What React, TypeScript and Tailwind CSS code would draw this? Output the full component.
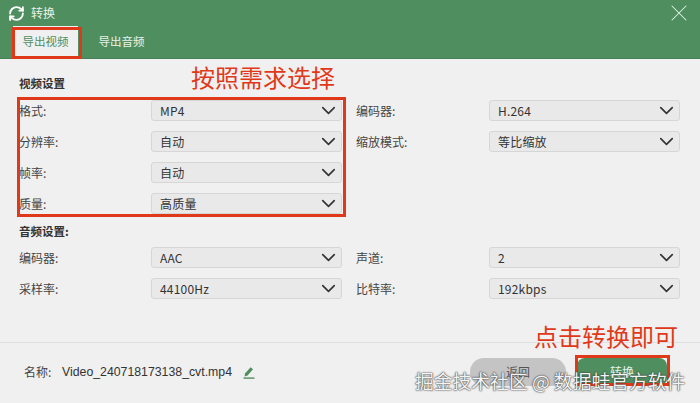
import { ChevronDown, RefreshCw, X } from 'lucide-react';

const font = { fontFamily: '"Noto Sans CJK SC", "Liberation Sans", sans-serif' };

function Select({ value, label, right }: { value: string; label: string; right?: boolean }) {
  return (
    <div className="flex items-center h-[21px]">
      <span className={`${right ? 'w-[133px]' : 'w-[132px]'} shrink-0 text-[12px] text-[#444]`}>{label}</span>
      <div className="w-[191px] h-[21px] flex items-center justify-between pl-2 pr-[1px] rounded-[3px] bg-[#e9e9e9] border border-[#d6d6d6]">
        <span className="text-[12px] text-[#333] tracking-[0.2px]">{value}</span>
        <ChevronDown className="size-[23px] shrink-0 text-[#333]" strokeWidth={1.7} />
      </div>
    </div>
  );
}

export default function App() {
  return (
    <div style={font} className="relative w-[700px] h-[403px] overflow-hidden bg-[#f0f0f0]">
      {/* 顶栏 */}
      <div className="h-[59px] bg-[#4f8f5f] border-b border-[#468055]">
        <div className="h-[26px] flex items-center justify-between pl-[8px] pr-[7px]">
          <div className="flex items-center gap-[6px]">
            <RefreshCw className="size-[17px] text-white" strokeWidth={2.6} />
            <span className="text-[12px] text-[#e8f2ea]">转换</span>
          </div>
          <X className="size-[28px] text-[#dff0e3]" strokeWidth={0.9} />
        </div>
        <div className="flex h-[32px] pl-[13px]">
          <div className="w-[65px] h-[32px] flex items-center justify-center bg-[#f0f0f0] text-[11.5px] text-[#4f8f5f]">导出视频</div>
          <div className="w-[87px] h-[32px] flex items-center justify-center text-[11.5px] text-[#e8f2ea]">导出音频</div>
        </div>
      </div>

      {/* 设置 */}
      <div className="pl-[19px] pt-[16px]">
        <div className="text-[11.5px] leading-[16px] font-bold text-[#333]">视频设置</div>
        <div className="grid grid-cols-[337px_324px] gap-x-0 gap-y-[10px] mt-[9px]">
          <Select label="格式:" value="MP4" />
          <Select right label="编码器:" value="H.264" />
          <Select label="分辨率:" value="自动" />
          <Select right label="缩放模式:" value="等比缩放" />
          <Select label="帧率:" value="自动" />
          <div />
          <Select label="质量:" value="高质量" />
          <div />
        </div>
        <div className="text-[11.5px] leading-[16px] font-bold text-[#333] mt-[9px]">音频设置:</div>
        <div className="grid grid-cols-[337px_324px] gap-x-0 gap-y-[10px] mt-[8px]">
          <Select label="编码器:" value="AAC" />
          <Select right label="声道:" value="2" />
          <Select label="采样率:" value="44100Hz" />
          <Select right label="比特率:" value="192kbps" />
        </div>
      </div>

      {/* 底栏 */}
      <div className="absolute left-0 right-0 top-[342px] h-[61px] border-t border-[#e0e0e0] flex items-center pl-[24px] pb-[2px]">
        <span className="text-[12px] text-[#444] w-[38px]">名称:</span>
        <span className="text-[12.3px] text-[#333]" style={{ fontFamily: '"Liberation Sans", sans-serif' }}>Video_240718173138_cvt.mp4</span>
        <svg viewBox="0 0 12 13" className="w-[12px] h-[13px] ml-[11px] text-[#4f8f5f]" fill="currentColor">
          <path d="M7.6 1.2 10 3.2 4.6 9.6 1.6 10.4 2 7.4Z" />
          <path d="M0.5 11.4H11.5V12.8H0.5Z" />
        </svg>
        <div className="ml-auto mr-[33px] flex items-center gap-[11px]">
          <div className="w-[96px] h-[28px] rounded-[14px] bg-[#c4c4c4] flex items-center justify-center text-[12px] text-[#555]">返回</div>
          <div className="w-[90px] h-[28px] rounded-[8px] bg-[#4f8f5f] flex items-center justify-center text-[12px] text-[#e8f2ea]">转换</div>
        </div>
      </div>

      {/* 标注 */}
      <div className="absolute left-[12px] top-[27px] w-[70px] h-[32px] border-[3px] border-[#e0391a]" />
      <div className="absolute left-[17px] top-[97px] w-[329px] h-[120px] border-[3px] border-[#e0391a]" />
      <div className="absolute left-[575px] top-[355px] w-[95px] h-[31px] border-[3px] border-[#e0391a]" />
      <div className="absolute left-[191px] top-[60px] text-[24px] leading-[34px] text-[#e0391a]">按照需求选择</div>
      <div className="absolute left-[534px] top-[319px] text-[24px] leading-[34px] text-[#e0391a]">点击转换即可</div>
      <div className="absolute left-[415px] top-[368px] text-[18.8px] leading-[26px] text-[#f4f4f4] whitespace-nowrap [text-shadow:0_0_2px_#333,0_0_1px_#333]">掘金技术社区 @ 数据蛙官方软件</div>
    </div>
  );
}
